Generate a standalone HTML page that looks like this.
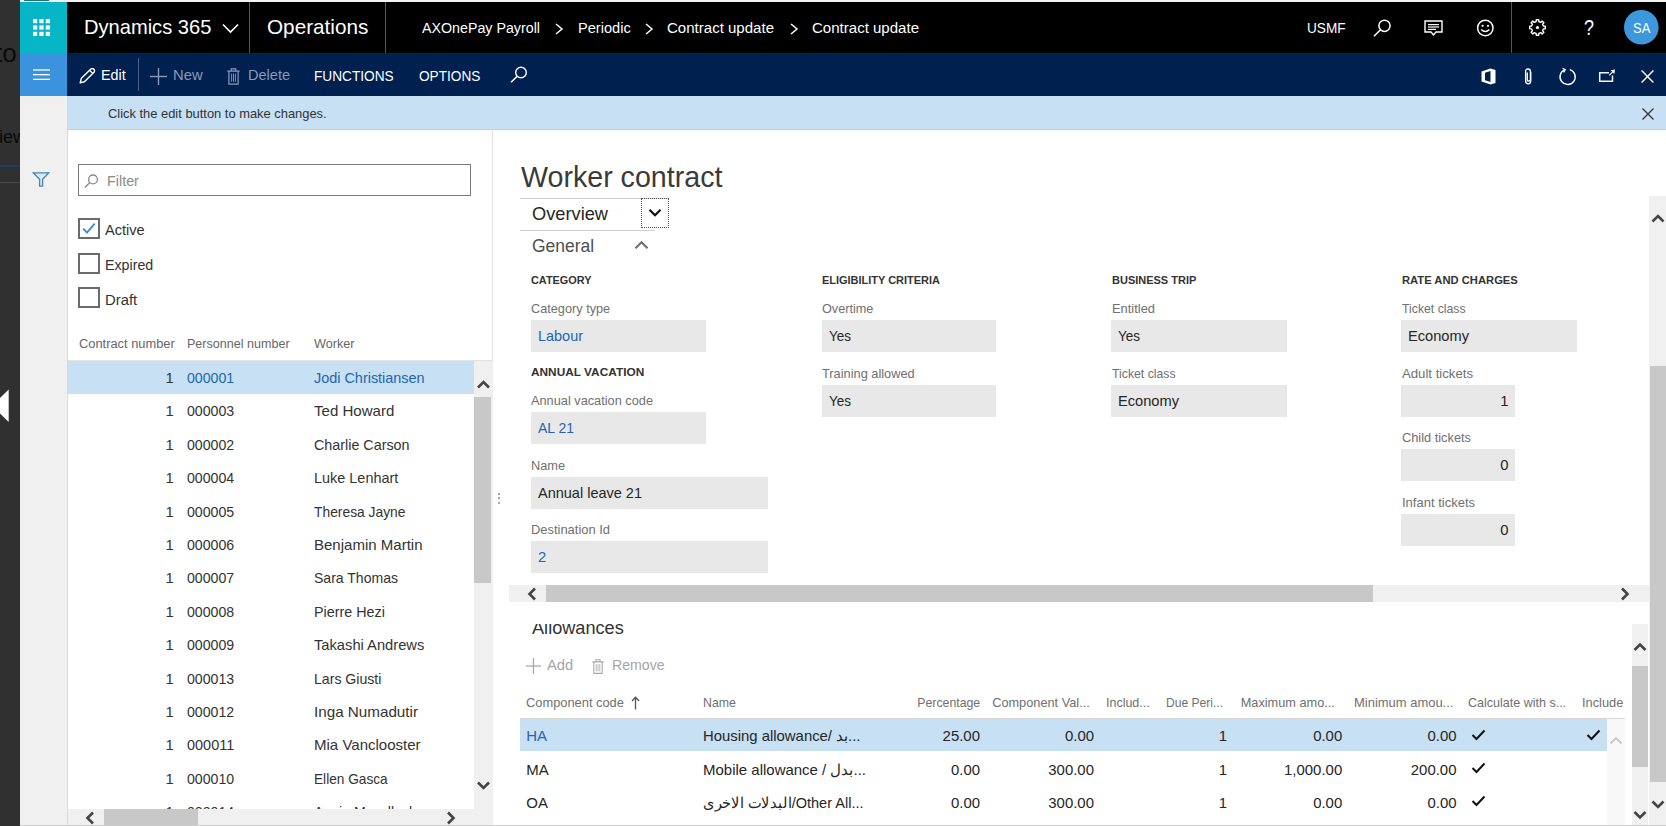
<!DOCTYPE html>
<html><head><meta charset="utf-8"><style>
html,body{margin:0;padding:0;width:1666px;height:826px;overflow:hidden;background:#fff}
body{position:relative;font-family:"Liberation Sans",sans-serif}
.r{position:absolute;display:block}
.t{position:absolute;white-space:nowrap;line-height:1;display:block}
</style></head><body>
<div class="r" style="left:0.00px;top:0.00px;width:1666.00px;height:826.00px;background:#ffffff;"></div>
<div class="r" style="left:0.00px;top:0.00px;width:20.00px;height:826.00px;background:#303030;"></div>
<div class="r" style="left:20.00px;top:0.00px;width:1646.00px;height:2.00px;background:#f4f4f4;"></div>
<div class="r" style="left:24.00px;top:0.00px;width:25.00px;height:1.00px;background:#2a6f80;"></div>
<div class="r" style="left:20.00px;top:2.00px;width:47.00px;height:52.00px;background:#06b6c6;"></div>
<div class="r" style="left:67.00px;top:2.00px;width:1599.00px;height:51.00px;background:#000000;"></div>
<div class="r" style="left:20.00px;top:54.00px;width:47.00px;height:42.00px;background:#3a93dc;"></div>
<div class="r" style="left:67.00px;top:53.00px;width:1599.00px;height:43.00px;background:#002050;"></div>
<div class="r" style="left:67.00px;top:96.00px;width:1599.00px;height:34.00px;background:#c7e0f4;"></div>
<div class="r" style="left:67.00px;top:129.20px;width:1599.00px;height:1.00px;background:#c2d2df;"></div>
<div class="r" style="left:20.00px;top:96.00px;width:47.00px;height:730.00px;background:#f0f0f0;"></div>
<div class="r" style="left:0;top:0;width:20px;height:826px;overflow:hidden">
<span id="t1" class="t" style="top:50.77px;font-size:13.03px;color:#0a0a0a;left:-5.00px;transform-origin:left top;font-size:26px;top:39.8px;">to</span>
<span id="t2" class="t" style="top:128.17px;font-size:18.11px;color:#0a0a0a;left:-1.00px;transform-origin:left top;">iew</span>
</div>
<div class="r" style="left:0.00px;top:165.00px;width:20.00px;height:2.00px;background:#1d3f66;"></div>
<div class="r" style="left:0.00px;top:181.50px;width:20.00px;height:1.00px;background:#4a4a4a;"></div>
<svg class="r" style="left:0.00px;top:389.00px;width:10.00px;height:34.00px" viewBox="0 0 10 34"><polygon points="8.7,0.5 8.7,33 -8,16.7" fill="#fff"/></svg>
<svg class="r" style="left:33.00px;top:19.00px;width:17.00px;height:17.00px" viewBox="0 0 17 17"><rect x="0" y="0" width="4.2" height="4.2" fill="#fff"/><rect x="6.4" y="0" width="4.2" height="4.2" fill="#fff"/><rect x="12.8" y="0" width="4.2" height="4.2" fill="#fff"/><rect x="0" y="6.4" width="4.2" height="4.2" fill="#fff"/><rect x="6.4" y="6.4" width="4.2" height="4.2" fill="#fff"/><rect x="12.8" y="6.4" width="4.2" height="4.2" fill="#fff"/><rect x="0" y="12.8" width="4.2" height="4.2" fill="#fff"/><rect x="6.4" y="12.8" width="4.2" height="4.2" fill="#fff"/><rect x="12.8" y="12.8" width="4.2" height="4.2" fill="#fff"/></svg>
<span id="t3" class="t" style="top:18.08px;font-size:19.75px;color:#fff;left:84.00px;transform-origin:left top;transform:scaleX(1.0173);">Dynamics 365</span>
<svg class="r" style="left:222.00px;top:23.00px;width:17.00px;height:11.00px" viewBox="0 0 17 11"><polyline points="1,1.5 8.5,9 16,1.5" fill="none" stroke="#fff" stroke-width="1.6"/></svg>
<div class="r" style="left:249.00px;top:2.00px;width:1.00px;height:51.00px;background:#555;"></div>
<span id="t4" class="t" style="top:18.08px;font-size:19.75px;color:#fff;left:266.50px;transform-origin:left top;transform:scaleX(1.0486);">Operations</span>
<div class="r" style="left:385.00px;top:2.00px;width:1.00px;height:51.00px;background:#555;"></div>
<span id="t5" class="t" style="top:20.38px;font-size:15.50px;color:#fff;left:422.20px;transform-origin:left top;transform:scaleX(0.9192);">AXOnePay Payroll</span>
<svg class="r" style="left:555.00px;top:22.50px;width:9.00px;height:12.00px" viewBox="0 0 9 12"><polyline points="1,1 7,6 1,11" fill="none" stroke="#fff" stroke-width="1.5"/></svg>
<span id="t6" class="t" style="top:20.38px;font-size:15.50px;color:#fff;left:577.70px;transform-origin:left top;transform:scaleX(0.9411);">Periodic</span>
<svg class="r" style="left:645.00px;top:22.50px;width:9.00px;height:12.00px" viewBox="0 0 9 12"><polyline points="1,1 7,6 1,11" fill="none" stroke="#fff" stroke-width="1.5"/></svg>
<span id="t7" class="t" style="top:20.38px;font-size:15.50px;color:#fff;left:667.30px;transform-origin:left top;transform:scaleX(0.9701);">Contract update</span>
<svg class="r" style="left:789.50px;top:22.50px;width:9.00px;height:12.00px" viewBox="0 0 9 12"><polyline points="1,1 7,6 1,11" fill="none" stroke="#fff" stroke-width="1.5"/></svg>
<span id="t8" class="t" style="top:20.38px;font-size:15.50px;color:#fff;left:811.50px;transform-origin:left top;transform:scaleX(0.9701);">Contract update</span>
<span id="t9" class="t" style="top:21.09px;font-size:14.54px;color:#fff;left:1306.90px;transform-origin:left top;transform:scaleX(0.9375);">USMF</span>
<svg class="r" style="left:1373.00px;top:18.50px;width:19.00px;height:18.00px" viewBox="0 0 19 18"><circle cx="11.5" cy="6.8" r="5.6" fill="none" stroke="#fff" stroke-width="1.5"/><line x1="7.5" y1="10.8" x2="1" y2="17.2" stroke="#fff" stroke-width="1.6"/></svg>
<svg class="r" style="left:1424.00px;top:20.00px;width:20.00px;height:17.00px" viewBox="0 0 20 17"><path d="M1,1 H18 V12 H12 L9.5,15 L7,12 H1 Z" fill="none" stroke="#fff" stroke-width="1.4"/><rect x="4" y="4" width="11" height="1.2" fill="#fff"/><rect x="4" y="6.4" width="11" height="1.2" fill="#fff"/><rect x="4" y="8.8" width="8" height="1.2" fill="#fff"/></svg>
<svg class="r" style="left:1476.00px;top:19.00px;width:19.00px;height:18.00px" viewBox="0 0 19 18"><circle cx="9.3" cy="9" r="7.7" fill="none" stroke="#fff" stroke-width="1.5"/><circle cx="6.6" cy="6.8" r="1.1" fill="#fff"/><circle cx="12" cy="6.8" r="1.1" fill="#fff"/><path d="M5.2,10.5 Q9.3,14.6 13.4,10.5" fill="none" stroke="#fff" stroke-width="1.4"/></svg>
<div class="r" style="left:1511.00px;top:2.00px;width:1.00px;height:51.00px;background:#555;"></div>
<svg class="r" style="left:1529.00px;top:18.50px;width:17.00px;height:17.00px" viewBox="0 0 17 17"><polygon points="14.04,6.20 14.35,7.15 16.30,7.26 16.30,9.74 14.35,9.85 14.04,10.80 13.59,11.68 14.89,13.14 13.14,14.89 11.68,13.59 10.80,14.04 9.85,14.35 9.74,16.30 7.26,16.30 7.15,14.35 6.20,14.04 5.32,13.59 3.86,14.89 2.11,13.14 3.41,11.68 2.96,10.80 2.65,9.85 0.70,9.74 0.70,7.26 2.65,7.15 2.96,6.20 3.41,5.32 2.11,3.86 3.86,2.11 5.32,3.41 6.20,2.96 7.15,2.65 7.26,0.70 9.74,0.70 9.85,2.65 10.80,2.96 11.68,3.41 13.14,2.11 14.89,3.86 13.59,5.32" fill="none" stroke="#fff" stroke-width="1.4" stroke-linejoin="round"/><circle cx="8.5" cy="8.5" r="1.6" fill="#fff"/></svg>
<span id="t10" class="t" style="top:17.79px;font-size:21.40px;color:#fff;left:1583.80px;transform-origin:left top;transform:scaleX(0.8402);">?</span>
<svg class="r" style="left:1624.00px;top:10.00px;width:35.00px;height:35.00px" viewBox="0 0 35 35"><circle cx="17.3" cy="17.3" r="17.3" fill="#3d97dc"/></svg>
<span id="t11" class="t" style="top:21.14px;font-size:14.95px;color:#fff;left:1632.70px;transform-origin:left top;transform:scaleX(0.8677);">SA</span>
<svg class="r" style="left:33.00px;top:69.00px;width:17.00px;height:12.00px" viewBox="0 0 17 12"><rect x="0" y="0.3" width="17" height="1.3" fill="#fff"/><rect x="0" y="5" width="17" height="1.3" fill="#fff"/><rect x="0" y="9.7" width="17" height="1.3" fill="#fff"/></svg>
<svg class="r" style="left:79.00px;top:68.00px;width:17.00px;height:16.00px" viewBox="0 0 17 16"><path d="M1.2,14.8 L2.2,10.6 L11.8,1 Q13.3,-0.2 14.8,1.2 Q16.2,2.7 15,4.2 L5.4,13.8 Z M10.6,2.2 L13.8,5.4" fill="none" stroke="#fff" stroke-width="1.4" stroke-linejoin="round"/></svg>
<span id="t12" class="t" style="top:68.44px;font-size:14.13px;color:#fff;left:101.20px;transform-origin:left top;transform:scaleX(1.0146);">Edit</span>
<div class="r" style="left:138.00px;top:58.00px;width:1.00px;height:33.00px;background:#4a5f86;"></div>
<svg class="r" style="left:150.00px;top:68.00px;width:17.00px;height:17.00px" viewBox="0 0 17 17"><rect x="7.8" y="0" width="1.4" height="17" fill="#8a9ab6"/><rect x="0" y="7.8" width="17" height="1.4" fill="#8a9ab6"/></svg>
<span id="t13" class="t" style="top:68.44px;font-size:14.13px;color:#8a9ab6;left:172.70px;transform-origin:left top;transform:scaleX(1.0472);">New</span>
<svg class="r" style="left:226.50px;top:67.50px;width:13.00px;height:17.00px" viewBox="0 0 13 17"><path d="M0.3,3.2 H12.7 M4.2,3.2 V0.9 H8.8 V3.2 M1.9,3.2 V16.2 H11.1 V3.2" fill="none" stroke="#8a9ab6" stroke-width="1.2"/><path d="M4.6,5.6 V13.8 M6.5,5.6 V13.8 M8.4,5.6 V13.8" fill="none" stroke="#8a9ab6" stroke-width="0.9"/></svg>
<span id="t14" class="t" style="top:68.44px;font-size:14.13px;color:#8a9ab6;left:247.90px;transform-origin:left top;transform:scaleX(1.0308);">Delete</span>
<span id="t15" class="t" style="top:68.99px;font-size:14.54px;color:#fff;left:314.40px;transform-origin:left top;transform:scaleX(0.9402);">FUNCTIONS</span>
<span id="t16" class="t" style="top:68.99px;font-size:14.54px;color:#fff;left:418.60px;transform-origin:left top;transform:scaleX(0.9387);">OPTIONS</span>
<svg class="r" style="left:510.00px;top:66.00px;width:18.00px;height:17.00px" viewBox="0 0 18 17"><circle cx="11" cy="6.5" r="5.3" fill="none" stroke="#fff" stroke-width="1.4"/><line x1="7.2" y1="10.3" x2="1" y2="16.3" stroke="#fff" stroke-width="1.5"/></svg>
<svg class="r" style="left:1481.00px;top:67.50px;width:15.00px;height:17.00px" viewBox="0 0 15 17"><path d="M0.5,3.5 L9.5,0.5 L14.5,2 V15 L9.5,16.5 L0.5,13.5 Z" fill="#fff"/><path d="M4,4.8 L9.5,3 V14 L4,12.3 Z" fill="#002050"/></svg>
<svg class="r" style="left:1524.00px;top:68.00px;width:9.00px;height:17.00px" viewBox="0 0 9 17"><path d="M6.8,4 V12.5 Q6.8,15.8 4.3,15.8 Q1.6,15.8 1.6,12.5 V3.5 Q1.6,1 4,1 Q6.4,1 6.4,3.5 V11.8 Q6.4,13 4.2,13 Q3.3,13 3.3,11.8 V4.5" fill="none" stroke="#fff" stroke-width="1.3"/></svg>
<svg class="r" style="left:1558.00px;top:67.50px;width:19.00px;height:18.00px" viewBox="0 0 19 18"><path d="M6.6,1.9 A7.6,7.6 0 1 0 11.8,1.6" fill="none" stroke="#fff" stroke-width="1.4"/><polyline points="4.6,0.3 7.2,1.7 5.6,4.4" fill="none" stroke="#fff" stroke-width="1.3"/></svg>
<svg class="r" style="left:1598.00px;top:69.00px;width:18.00px;height:14.00px" viewBox="0 0 18 14"><path d="M11,3.7 H1.7 V12.3 H14.5 V6.6" fill="none" stroke="#f2f5fa" stroke-width="1.5"/><path d="M11.3,6.4 L15.2,2.4" fill="none" stroke="#f2f5fa" stroke-width="1.3"/><polygon points="17,0.6 12.6,1.2 16.4,5" fill="#f2f5fa"/></svg>
<svg class="r" style="left:1641.00px;top:70.00px;width:13.00px;height:13.00px" viewBox="0 0 13 13"><path d="M0.6,0.6 L12.4,12.4 M12.4,0.6 L0.6,12.4" stroke="#fff" stroke-width="1.4"/></svg>
<span id="t17" class="t" style="top:107.90px;font-size:12.76px;color:#333;left:107.90px;transform-origin:left top;transform:scaleX(1.0112);">Click the edit button to make changes.</span>
<svg class="r" style="left:1642.00px;top:108.00px;width:12.00px;height:12.00px" viewBox="0 0 12 12"><path d="M0.5,0.5 L11.5,11.5 M11.5,0.5 L0.5,11.5" stroke="#333" stroke-width="1.3"/></svg>
<svg class="r" style="left:32.00px;top:171.00px;width:18.00px;height:17.00px" viewBox="0 0 18 17"><path d="M1.2,1.8 H16.8 L10.6,8.3 V15.2 H7.6 V8.3 Z" fill="#d2ecfb" stroke="#4f82ab" stroke-width="1.3" stroke-linejoin="miter"/></svg>
<div class="r" style="left:66.50px;top:130.00px;width:1.00px;height:696.00px;background:#dcdcdc;"></div>
<div class="r" style="left:492.00px;top:130.00px;width:1.00px;height:696.00px;background:#e4e4e4;"></div>
<div class="r" style="left:474.40px;top:360.50px;width:18.60px;height:465.50px;background:#f0f0f0;"></div>
<div class="r" style="left:497.6px;top:492.6px;width:2px;height:2px;border-radius:1px;background:#888"></div>
<div class="r" style="left:497.6px;top:497.3px;width:2px;height:2px;border-radius:1px;background:#888"></div>
<div class="r" style="left:497.6px;top:502.0px;width:2px;height:2px;border-radius:1px;background:#888"></div>
<div class="r" style="left:78.00px;top:164.00px;width:393.00px;height:31.50px;background:#fff;border:1.6px solid #7a7a7a;box-sizing:border-box;"></div>
<svg class="r" style="left:84.00px;top:174.00px;width:15.00px;height:14.00px" viewBox="0 0 15 14"><circle cx="9" cy="5.4" r="4.4" fill="none" stroke="#888" stroke-width="1.3"/><line x1="5.8" y1="8.6" x2="1" y2="13.4" stroke="#888" stroke-width="1.4"/></svg>
<span id="t18" class="t" style="top:174.16px;font-size:14.81px;color:#8a8a8a;left:106.60px;transform-origin:left top;transform:scaleX(0.9699);">Filter</span>
<div class="r" style="left:78.40px;top:217.50px;width:21.20px;height:21.00px;background:#fff;border:2px solid #6b6b6b;box-sizing:border-box;"></div>
<svg class="r" style="left:80.00px;top:219.50px;width:18.00px;height:17.00px" viewBox="0 0 18 17"><polyline points="3.2,8.6 7,12.6 14.6,3.6" fill="none" stroke="#3a8fd6" stroke-width="1.9"/></svg>
<span id="t19" class="t" style="top:221.81px;font-size:15.23px;color:#333;left:105.30px;transform-origin:left top;transform:scaleX(0.9577);">Active</span>
<div class="r" style="left:78.40px;top:253.00px;width:21.20px;height:21.00px;background:#fff;border:2px solid #6b6b6b;box-sizing:border-box;"></div>
<span id="t20" class="t" style="top:257.31px;font-size:15.23px;color:#333;left:105.30px;transform-origin:left top;transform:scaleX(0.9339);">Expired</span>
<div class="r" style="left:78.40px;top:287.30px;width:21.20px;height:21.00px;background:#fff;border:2px solid #6b6b6b;box-sizing:border-box;"></div>
<span id="t21" class="t" style="top:291.61px;font-size:15.23px;color:#333;left:105.30px;transform-origin:left top;transform:scaleX(0.9762);">Draft</span>
<span id="t22" class="t" style="top:338.33px;font-size:12.48px;color:#666;left:78.60px;transform-origin:left top;transform:scaleX(1.0315);">Contract number</span>
<span id="t23" class="t" style="top:338.33px;font-size:12.48px;color:#666;left:187.40px;transform-origin:left top;transform:scaleX(1.0070);">Personnel number</span>
<span id="t24" class="t" style="top:338.33px;font-size:12.48px;color:#666;left:314.00px;transform-origin:left top;transform:scaleX(1.0137);">Worker</span>
<div class="r" style="left:67.50px;top:359.50px;width:424.50px;height:1.00px;background:#e3e3e3;"></div>
<div class="r" style="left:67.50px;top:360.50px;width:406.90px;height:33.30px;background:#c7e0f4;"></div>
<span id="t25" class="t" style="top:370.96px;font-size:14.81px;color:#333;right:1492.40px;transform-origin:right top;">1</span>
<span id="t26" class="t" style="top:370.96px;font-size:14.81px;color:#2266b3;left:187.00px;transform-origin:left top;transform:scaleX(0.9556);">000001</span>
<span id="t27" class="t" style="top:370.96px;font-size:14.81px;color:#2266b3;left:314.00px;transform-origin:left top;transform:scaleX(0.9744);">Jodi Christiansen</span>
<span id="t28" class="t" style="top:404.36px;font-size:14.81px;color:#333;right:1492.40px;transform-origin:right top;">1</span>
<span id="t29" class="t" style="top:404.36px;font-size:14.81px;color:#333;left:187.00px;transform-origin:left top;transform:scaleX(0.9556);">000003</span>
<span id="t30" class="t" style="top:404.36px;font-size:14.81px;color:#333;left:314.00px;transform-origin:left top;transform:scaleX(1.0169);">Ted Howard</span>
<span id="t31" class="t" style="top:437.76px;font-size:14.81px;color:#333;right:1492.40px;transform-origin:right top;">1</span>
<span id="t32" class="t" style="top:437.76px;font-size:14.81px;color:#333;left:187.00px;transform-origin:left top;transform:scaleX(0.9556);">000002</span>
<span id="t33" class="t" style="top:437.76px;font-size:14.81px;color:#333;left:314.00px;transform-origin:left top;transform:scaleX(0.9677);">Charlie Carson</span>
<span id="t34" class="t" style="top:471.16px;font-size:14.81px;color:#333;right:1492.40px;transform-origin:right top;">1</span>
<span id="t35" class="t" style="top:471.16px;font-size:14.81px;color:#333;left:187.00px;transform-origin:left top;transform:scaleX(0.9556);">000004</span>
<span id="t36" class="t" style="top:471.16px;font-size:14.81px;color:#333;left:314.00px;transform-origin:left top;transform:scaleX(0.9758);">Luke Lenhart</span>
<span id="t37" class="t" style="top:504.56px;font-size:14.81px;color:#333;right:1492.40px;transform-origin:right top;">1</span>
<span id="t38" class="t" style="top:504.56px;font-size:14.81px;color:#333;left:187.00px;transform-origin:left top;transform:scaleX(0.9556);">000005</span>
<span id="t39" class="t" style="top:504.56px;font-size:14.81px;color:#333;left:314.00px;transform-origin:left top;transform:scaleX(0.9347);">Theresa Jayne</span>
<span id="t40" class="t" style="top:537.96px;font-size:14.81px;color:#333;right:1492.40px;transform-origin:right top;">1</span>
<span id="t41" class="t" style="top:537.96px;font-size:14.81px;color:#333;left:187.00px;transform-origin:left top;transform:scaleX(0.9556);">000006</span>
<span id="t42" class="t" style="top:537.96px;font-size:14.81px;color:#333;left:314.00px;transform-origin:left top;transform:scaleX(1.0148);">Benjamin Martin</span>
<span id="t43" class="t" style="top:571.36px;font-size:14.81px;color:#333;right:1492.40px;transform-origin:right top;">1</span>
<span id="t44" class="t" style="top:571.36px;font-size:14.81px;color:#333;left:187.00px;transform-origin:left top;transform:scaleX(0.9556);">000007</span>
<span id="t45" class="t" style="top:571.36px;font-size:14.81px;color:#333;left:314.00px;transform-origin:left top;transform:scaleX(0.9485);">Sara Thomas</span>
<span id="t46" class="t" style="top:604.76px;font-size:14.81px;color:#333;right:1492.40px;transform-origin:right top;">1</span>
<span id="t47" class="t" style="top:604.76px;font-size:14.81px;color:#333;left:187.00px;transform-origin:left top;transform:scaleX(0.9556);">000008</span>
<span id="t48" class="t" style="top:604.76px;font-size:14.81px;color:#333;left:314.00px;transform-origin:left top;transform:scaleX(0.9687);">Pierre Hezi</span>
<span id="t49" class="t" style="top:638.16px;font-size:14.81px;color:#333;right:1492.40px;transform-origin:right top;">1</span>
<span id="t50" class="t" style="top:638.16px;font-size:14.81px;color:#333;left:187.00px;transform-origin:left top;transform:scaleX(0.9556);">000009</span>
<span id="t51" class="t" style="top:638.16px;font-size:14.81px;color:#333;left:314.00px;transform-origin:left top;transform:scaleX(0.9933);">Takashi Andrews</span>
<span id="t52" class="t" style="top:671.56px;font-size:14.81px;color:#333;right:1492.40px;transform-origin:right top;">1</span>
<span id="t53" class="t" style="top:671.56px;font-size:14.81px;color:#333;left:187.00px;transform-origin:left top;transform:scaleX(0.9556);">000013</span>
<span id="t54" class="t" style="top:671.56px;font-size:14.81px;color:#333;left:314.00px;transform-origin:left top;transform:scaleX(0.9531);">Lars Giusti</span>
<span id="t55" class="t" style="top:704.96px;font-size:14.81px;color:#333;right:1492.40px;transform-origin:right top;">1</span>
<span id="t56" class="t" style="top:704.96px;font-size:14.81px;color:#333;left:187.00px;transform-origin:left top;transform:scaleX(0.9556);">000012</span>
<span id="t57" class="t" style="top:704.96px;font-size:14.81px;color:#333;left:314.00px;transform-origin:left top;transform:scaleX(1.0280);">Inga Numadutir</span>
<span id="t58" class="t" style="top:738.36px;font-size:14.81px;color:#333;right:1492.40px;transform-origin:right top;">1</span>
<span id="t59" class="t" style="top:738.36px;font-size:14.81px;color:#333;left:187.00px;transform-origin:left top;transform:scaleX(0.9776);">000011</span>
<span id="t60" class="t" style="top:738.36px;font-size:14.81px;color:#333;left:314.00px;transform-origin:left top;transform:scaleX(1.0152);">Mia Vanclooster</span>
<span id="t61" class="t" style="top:771.76px;font-size:14.81px;color:#333;right:1492.40px;transform-origin:right top;">1</span>
<span id="t62" class="t" style="top:771.76px;font-size:14.81px;color:#333;left:187.00px;transform-origin:left top;transform:scaleX(0.9556);">000010</span>
<span id="t63" class="t" style="top:771.76px;font-size:14.81px;color:#333;left:314.00px;transform-origin:left top;transform:scaleX(0.9238);">Ellen Gasca</span>
<span id="t64" class="t" style="top:805.16px;font-size:14.81px;color:#333;right:1492.40px;transform-origin:right top;">1</span>
<span id="t65" class="t" style="top:805.16px;font-size:14.81px;color:#333;left:187.00px;transform-origin:left top;transform:scaleX(0.9556);">000014</span>
<span id="t66" class="t" style="top:805.16px;font-size:14.81px;color:#333;left:314.00px;transform-origin:left top;transform:scaleX(0.9540);">Annie Mccallock</span>
<div class="r" style="left:67.50px;top:808.50px;width:424.50px;height:17.50px;background:#f0f0f0;"></div>
<div class="r" style="left:474.40px;top:397.00px;width:16.30px;height:186.00px;background:#c8c8c8;"></div>
<svg class="r" style="left:477.00px;top:380.00px;width:13.00px;height:9.00px" viewBox="0 0 13 9"><polyline points="1,7.5 6.5,2 12,7.5" fill="none" stroke="#444" stroke-width="2.6" stroke-linejoin="miter"/></svg>
<svg class="r" style="left:477.00px;top:781.00px;width:13.00px;height:9.00px" viewBox="0 0 13 9"><polyline points="1,1.5 6.5,7 12,1.5" fill="none" stroke="#444" stroke-width="2.6" stroke-linejoin="miter"/></svg>
<div class="r" style="left:104.00px;top:808.50px;width:94.00px;height:17.50px;background:#c8c8c8;"></div>
<svg class="r" style="left:85.00px;top:810.50px;width:10.00px;height:14.00px" viewBox="0 0 10 14"><polyline points="8,1.5 2.5,7 8,12.5" fill="none" stroke="#444" stroke-width="2.6" stroke-linejoin="miter"/></svg>
<svg class="r" style="left:446.00px;top:810.50px;width:10.00px;height:14.00px" viewBox="0 0 10 14"><polyline points="2,1.5 7.5,7 2,12.5" fill="none" stroke="#444" stroke-width="2.6" stroke-linejoin="miter"/></svg>
<span id="t67" class="t" style="top:162.78px;font-size:29.08px;color:#3a3a3a;left:521.30px;transform-origin:left top;transform:scaleX(0.9839);">Worker contract</span>
<div class="r" style="left:520.00px;top:198.00px;width:148.00px;height:1.00px;background:#d0d0d0;"></div>
<div class="r" style="left:520.00px;top:229.80px;width:135.00px;height:1.00px;background:#d0d0d0;"></div>
<span id="t68" class="t" style="top:205.06px;font-size:18.24px;color:#262626;left:532.00px;transform-origin:left top;">Overview</span>
<div class="r" style="left:640.5px;top:198.3px;width:28px;height:29.3px;border:1px dotted #555;box-sizing:border-box"></div>
<svg class="r" style="left:647.50px;top:208.00px;width:14.00px;height:10.00px" viewBox="0 0 14 10"><polyline points="1.5,1.8 7,7.3 12.5,1.8" fill="none" stroke="#111" stroke-width="2.2"/></svg>
<span id="t69" class="t" style="top:237.11px;font-size:18.66px;color:#505050;left:532.00px;transform-origin:left top;transform:scaleX(0.9371);">General</span>
<svg class="r" style="left:634.00px;top:239.50px;width:15.00px;height:10.00px" viewBox="0 0 15 10"><polyline points="1.5,8.3 7.5,2.3 13.5,8.3" fill="none" stroke="#707070" stroke-width="2.2"/></svg>
<span id="t70" class="t" style="top:274.85px;font-size:11.52px;color:#333;font-weight:bold;left:531.40px;transform-origin:left top;transform:scaleX(0.9440);">CATEGORY</span>
<span id="t71" class="t" style="top:274.85px;font-size:11.52px;color:#333;font-weight:bold;left:821.60px;transform-origin:left top;transform:scaleX(0.9515);">ELIGIBILITY CRITERIA</span>
<span id="t72" class="t" style="top:274.85px;font-size:11.52px;color:#333;font-weight:bold;left:1111.50px;transform-origin:left top;transform:scaleX(0.9546);">BUSINESS TRIP</span>
<span id="t73" class="t" style="top:274.85px;font-size:11.52px;color:#333;font-weight:bold;left:1402.00px;transform-origin:left top;transform:scaleX(0.9731);">RATE AND CHARGES</span>
<span id="t74" class="t" style="top:303.05px;font-size:12.35px;color:#707070;left:531.40px;transform-origin:left top;transform:scaleX(1.0305);">Category type</span>
<div class="r" style="left:531.00px;top:320.00px;width:175.00px;height:32.00px;background:#e8e8e8;"></div>
<span id="t75" class="t" style="top:329.26px;font-size:14.81px;color:#2266b3;left:538.00px;transform-origin:left top;transform:scaleX(0.9766);">Labour</span>
<span id="t76" class="t" style="top:303.05px;font-size:12.35px;color:#707070;left:821.60px;transform-origin:left top;transform:scaleX(1.0264);">Overtime</span>
<div class="r" style="left:821.60px;top:320.00px;width:174.40px;height:32.00px;background:#e8e8e8;"></div>
<span id="t77" class="t" style="top:329.26px;font-size:14.81px;color:#262626;left:828.60px;transform-origin:left top;transform:scaleX(0.9113);">Yes</span>
<span id="t78" class="t" style="top:303.05px;font-size:12.35px;color:#707070;left:1111.50px;transform-origin:left top;transform:scaleX(1.0440);">Entitled</span>
<div class="r" style="left:1111.00px;top:320.00px;width:176.00px;height:32.00px;background:#e8e8e8;"></div>
<span id="t79" class="t" style="top:329.26px;font-size:14.81px;color:#262626;left:1118.00px;transform-origin:left top;transform:scaleX(0.9113);">Yes</span>
<span id="t80" class="t" style="top:303.05px;font-size:12.35px;color:#707070;left:1402.00px;transform-origin:left top;transform:scaleX(0.9935);">Ticket class</span>
<div class="r" style="left:1401.00px;top:320.00px;width:176.00px;height:32.00px;background:#e8e8e8;"></div>
<span id="t81" class="t" style="top:329.26px;font-size:14.81px;color:#262626;left:1408.00px;transform-origin:left top;transform:scaleX(0.9889);">Economy</span>
<span id="t82" class="t" style="top:366.55px;font-size:11.52px;color:#333;font-weight:bold;left:531.40px;transform-origin:left top;transform:scaleX(1.0287);">ANNUAL VACATION</span>
<span id="t83" class="t" style="top:395.25px;font-size:12.35px;color:#707070;left:531.40px;transform-origin:left top;transform:scaleX(1.0335);">Annual vacation code</span>
<div class="r" style="left:531.00px;top:412.00px;width:175.00px;height:32.00px;background:#e8e8e8;"></div>
<span id="t84" class="t" style="top:421.26px;font-size:14.81px;color:#2266b3;left:538.00px;transform-origin:left top;transform:scaleX(0.9443);">AL 21</span>
<span id="t85" class="t" style="top:460.05px;font-size:12.35px;color:#707070;left:531.40px;transform-origin:left top;transform:scaleX(1.0323);">Name</span>
<div class="r" style="left:531.00px;top:476.50px;width:236.60px;height:32.00px;background:#e8e8e8;"></div>
<span id="t86" class="t" style="top:485.76px;font-size:14.81px;color:#262626;left:538.00px;transform-origin:left top;transform:scaleX(0.9798);">Annual leave 21</span>
<span id="t87" class="t" style="top:524.25px;font-size:12.35px;color:#707070;left:531.40px;transform-origin:left top;transform:scaleX(1.0466);">Destination Id</span>
<div class="r" style="left:531.00px;top:541.00px;width:236.60px;height:32.00px;background:#e8e8e8;"></div>
<span id="t88" class="t" style="top:550.26px;font-size:14.81px;color:#2266b3;left:538.00px;transform-origin:left top;">2</span>
<span id="t89" class="t" style="top:367.55px;font-size:12.35px;color:#707070;left:821.60px;transform-origin:left top;transform:scaleX(1.0365);">Training allowed</span>
<div class="r" style="left:821.60px;top:384.60px;width:174.40px;height:32.00px;background:#e8e8e8;"></div>
<span id="t90" class="t" style="top:393.86px;font-size:14.81px;color:#262626;left:828.60px;transform-origin:left top;transform:scaleX(0.9113);">Yes</span>
<span id="t91" class="t" style="top:367.55px;font-size:12.35px;color:#707070;left:1111.50px;transform-origin:left top;transform:scaleX(0.9935);">Ticket class</span>
<div class="r" style="left:1111.00px;top:384.60px;width:176.00px;height:32.00px;background:#e8e8e8;"></div>
<span id="t92" class="t" style="top:393.86px;font-size:14.81px;color:#262626;left:1118.00px;transform-origin:left top;transform:scaleX(0.9889);">Economy</span>
<span id="t93" class="t" style="top:367.55px;font-size:12.35px;color:#707070;left:1402.00px;transform-origin:left top;transform:scaleX(1.0669);">Adult tickets</span>
<div class="r" style="left:1401.00px;top:384.60px;width:114.00px;height:32.00px;background:#e8e8e8;"></div>
<span id="t94" class="t" style="top:393.86px;font-size:14.81px;color:#262626;right:157.50px;transform-origin:right top;">1</span>
<span id="t95" class="t" style="top:432.15px;font-size:12.35px;color:#707070;left:1402.00px;transform-origin:left top;transform:scaleX(1.0369);">Child tickets</span>
<div class="r" style="left:1401.00px;top:449.00px;width:114.00px;height:32.00px;background:#e8e8e8;"></div>
<span id="t96" class="t" style="top:458.26px;font-size:14.81px;color:#262626;right:157.50px;transform-origin:right top;">0</span>
<span id="t97" class="t" style="top:496.75px;font-size:12.35px;color:#707070;left:1402.00px;transform-origin:left top;transform:scaleX(1.0534);">Infant tickets</span>
<div class="r" style="left:1401.00px;top:513.60px;width:114.00px;height:32.00px;background:#e8e8e8;"></div>
<span id="t98" class="t" style="top:522.86px;font-size:14.81px;color:#262626;right:157.50px;transform-origin:right top;">0</span>
<div class="r" style="left:509.00px;top:585.00px;width:1140.00px;height:17.00px;background:#f0f0f0;"></div>
<div class="r" style="left:545.60px;top:585.00px;width:827.40px;height:17.00px;background:#c8c8c8;"></div>
<svg class="r" style="left:527.00px;top:587.00px;width:10.00px;height:14.00px" viewBox="0 0 10 14"><polyline points="8,1.5 2.5,7 8,12.5" fill="none" stroke="#444" stroke-width="2.6" stroke-linejoin="miter"/></svg>
<svg class="r" style="left:1620.00px;top:587.00px;width:10.00px;height:14.00px" viewBox="0 0 10 14"><polyline points="2,1.5 7.5,7 2,12.5" fill="none" stroke="#444" stroke-width="2.6" stroke-linejoin="miter"/></svg>
<div class="r" style="left:1649.00px;top:196.00px;width:17.00px;height:630.00px;background:#f0f0f0;"></div>
<div class="r" style="left:1649.50px;top:366.40px;width:16.50px;height:415.60px;background:#c8c8c8;"></div>
<svg class="r" style="left:1651.00px;top:213.00px;width:14.00px;height:11.00px" viewBox="0 0 14 11"><polyline points="1.5,8.5 7,3 12.5,8.5" fill="none" stroke="#444" stroke-width="2.6" stroke-linejoin="miter"/></svg>
<svg class="r" style="left:1651.00px;top:798.50px;width:14.00px;height:11.00px" viewBox="0 0 14 11"><polyline points="1.5,2.5 7,8 12.5,2.5" fill="none" stroke="#444" stroke-width="2.6" stroke-linejoin="miter"/></svg>
<span id="t99" class="t" style="top:619.21px;font-size:18.66px;color:#333;left:531.50px;transform-origin:left top;transform:scaleX(0.9727);">Allowances</span>
<div class="r" style="left:509.00px;top:610.00px;width:1140.00px;height:14.00px;background:#fff;"></div>
<svg class="r" style="left:525.50px;top:658.00px;width:15.00px;height:16.00px" viewBox="0 0 15 16"><rect x="6.8" y="0" width="1.3" height="16" fill="#aaa"/><rect x="0" y="7.4" width="15" height="1.3" fill="#aaa"/></svg>
<span id="t100" class="t" style="top:658.04px;font-size:14.95px;color:#a6a6a6;left:546.50px;transform-origin:left top;transform:scaleX(0.9890);">Add</span>
<svg class="r" style="left:591.50px;top:658.50px;width:12.00px;height:15.00px" viewBox="0 0 12 15"><path d="M0.3,2.9 H11.7 M3.9,2.9 V0.8 H8.1 V2.9 M1.8,2.9 V14.4 H10.2 V2.9" fill="none" stroke="#aaa" stroke-width="1.1"/><path d="M4.2,5.1 V12.4 M6,5.1 V12.4 M7.8,5.1 V12.4" fill="none" stroke="#aaa" stroke-width="0.85"/></svg>
<span id="t101" class="t" style="top:658.04px;font-size:14.95px;color:#a6a6a6;left:611.60px;transform-origin:left top;transform:scaleX(0.9456);">Remove</span>
<span id="t102" class="t" style="top:696.80px;font-size:12.76px;color:#707070;left:525.90px;transform-origin:left top;transform:scaleX(1.0081);">Component code</span>
<svg class="r" style="left:631.00px;top:696.00px;width:9.00px;height:14.00px" viewBox="0 0 9 14"><path d="M4.5,13.5 V1.5 M1,5 L4.5,1.2 L8,5" fill="none" stroke="#555" stroke-width="1.3"/></svg>
<span id="t103" class="t" style="top:696.80px;font-size:12.76px;color:#707070;left:702.60px;transform-origin:left top;transform:scaleX(0.9672);">Name</span>
<span id="t104" class="t" style="top:696.80px;font-size:12.76px;color:#707070;right:686.00px;transform-origin:right top;transform:scaleX(0.9644);">Percentage</span>
<span id="t105" class="t" style="top:696.80px;font-size:12.76px;color:#707070;left:992.20px;transform-origin:left top;">Component Val...</span>
<span id="t106" class="t" style="top:696.80px;font-size:12.76px;color:#707070;left:1105.80px;transform-origin:left top;transform:scaleX(0.9786);">Includ...</span>
<span id="t107" class="t" style="top:696.80px;font-size:12.76px;color:#707070;left:1166.20px;transform-origin:left top;transform:scaleX(0.9463);">Due Peri...</span>
<span id="t108" class="t" style="top:696.80px;font-size:12.76px;color:#707070;left:1240.70px;transform-origin:left top;">Maximum amo...</span>
<span id="t109" class="t" style="top:696.80px;font-size:12.76px;color:#707070;left:1354.30px;transform-origin:left top;transform:scaleX(1.0166);">Minimum amou...</span>
<span id="t110" class="t" style="top:696.80px;font-size:12.76px;color:#707070;left:1467.90px;transform-origin:left top;transform:scaleX(0.9818);">Calculate with s...</span>
<span id="t111" class="t" style="top:696.80px;font-size:12.76px;color:#707070;left:1582.30px;transform-origin:left top;transform:scaleX(1.0067);">Include</span>
<div class="r" style="left:520.00px;top:718.00px;width:1105.00px;height:1.20px;background:#d6d6d6;"></div>
<div class="r" style="left:520.00px;top:719.20px;width:1087.00px;height:32.10px;background:#c7e0f4;"></div>
<div class="r" style="left:1607.00px;top:719.20px;width:18.00px;height:106.80px;background:#f8f8f8;"></div>
<svg class="r" style="left:1609.00px;top:736.00px;width:14.00px;height:9.00px" viewBox="0 0 14 9"><polyline points="1.5,7.5 7,2 12.5,7.5" fill="none" stroke="#c8c8c8" stroke-width="1.8"/></svg>
<span id="t112" class="t" style="top:729.34px;font-size:14.95px;color:#2266b3;left:526.30px;transform-origin:left top;">HA</span>
<span id="t113" class="t" style="top:729.34px;font-size:14.95px;color:#262626;left:702.60px;transform-origin:left top;transform:scaleX(0.9959);">Housing allowance/ بد...</span>
<span id="t114" class="t" style="top:729.34px;font-size:14.95px;color:#262626;right:686.00px;transform-origin:right top;">25.00</span>
<span id="t115" class="t" style="top:729.34px;font-size:14.95px;color:#262626;right:572.00px;transform-origin:right top;">0.00</span>
<span id="t116" class="t" style="top:729.34px;font-size:14.95px;color:#262626;right:439.00px;transform-origin:right top;">1</span>
<span id="t117" class="t" style="top:729.34px;font-size:14.95px;color:#262626;right:323.80px;transform-origin:right top;">0.00</span>
<span id="t118" class="t" style="top:729.34px;font-size:14.95px;color:#262626;right:209.50px;transform-origin:right top;">0.00</span>
<svg class="r" style="left:1471.00px;top:728.50px;width:15.00px;height:12.00px" viewBox="0 0 15 12"><polyline points="1.5,6 5.5,10 13.5,1.5" fill="none" stroke="#111" stroke-width="2"/></svg>
<svg class="r" style="left:1585.50px;top:728.50px;width:15.00px;height:12.00px" viewBox="0 0 15 12"><polyline points="1.5,6 5.5,10 13.5,1.5" fill="none" stroke="#111" stroke-width="2"/></svg>
<span id="t119" class="t" style="top:762.54px;font-size:14.95px;color:#262626;left:526.30px;transform-origin:left top;">MA</span>
<span id="t120" class="t" style="top:762.54px;font-size:14.95px;color:#262626;left:702.60px;transform-origin:left top;transform:scaleX(1.0031);">Mobile allowance / بدل...</span>
<span id="t121" class="t" style="top:762.54px;font-size:14.95px;color:#262626;right:686.00px;transform-origin:right top;">0.00</span>
<span id="t122" class="t" style="top:762.54px;font-size:14.95px;color:#262626;right:572.00px;transform-origin:right top;">300.00</span>
<span id="t123" class="t" style="top:762.54px;font-size:14.95px;color:#262626;right:439.00px;transform-origin:right top;">1</span>
<span id="t124" class="t" style="top:762.54px;font-size:14.95px;color:#262626;right:323.80px;transform-origin:right top;">1,000.00</span>
<span id="t125" class="t" style="top:762.54px;font-size:14.95px;color:#262626;right:209.50px;transform-origin:right top;">200.00</span>
<svg class="r" style="left:1471.00px;top:761.70px;width:15.00px;height:12.00px" viewBox="0 0 15 12"><polyline points="1.5,6 5.5,10 13.5,1.5" fill="none" stroke="#111" stroke-width="2"/></svg>
<span id="t126" class="t" style="top:795.74px;font-size:14.95px;color:#262626;left:526.30px;transform-origin:left top;">OA</span>
<span id="t127" class="t" style="top:795.74px;font-size:14.95px;color:#262626;left:702.60px;transform-origin:left top;transform:scaleX(0.9725);"><span style="unicode-bidi:isolate">البدلات الاخرى</span>/Other All...</span>
<span id="t128" class="t" style="top:795.74px;font-size:14.95px;color:#262626;right:686.00px;transform-origin:right top;">0.00</span>
<span id="t129" class="t" style="top:795.74px;font-size:14.95px;color:#262626;right:572.00px;transform-origin:right top;">300.00</span>
<span id="t130" class="t" style="top:795.74px;font-size:14.95px;color:#262626;right:439.00px;transform-origin:right top;">1</span>
<span id="t131" class="t" style="top:795.74px;font-size:14.95px;color:#262626;right:323.80px;transform-origin:right top;">0.00</span>
<span id="t132" class="t" style="top:795.74px;font-size:14.95px;color:#262626;right:209.50px;transform-origin:right top;">0.00</span>
<svg class="r" style="left:1471.00px;top:794.90px;width:15.00px;height:12.00px" viewBox="0 0 15 12"><polyline points="1.5,6 5.5,10 13.5,1.5" fill="none" stroke="#111" stroke-width="2"/></svg>
<div class="r" style="left:1631.80px;top:624.00px;width:16.70px;height:202.00px;background:#f0f0f0;"></div>
<div class="r" style="left:1632.00px;top:666.30px;width:16.20px;height:100.70px;background:#c8c8c8;"></div>
<svg class="r" style="left:1633.00px;top:642.00px;width:14.00px;height:10.00px" viewBox="0 0 14 10"><polyline points="1.5,8 7,2.5 12.5,8" fill="none" stroke="#444" stroke-width="2.6" stroke-linejoin="miter"/></svg>
<svg class="r" style="left:1633.00px;top:810.00px;width:14.00px;height:10.00px" viewBox="0 0 14 10"><polyline points="1.5,2 7,7.5 12.5,2" fill="none" stroke="#444" stroke-width="2.6" stroke-linejoin="miter"/></svg>
<div class="r" style="left:20.00px;top:825.00px;width:1646.00px;height:1.00px;background:#cdcdcd;"></div>
</body></html>
